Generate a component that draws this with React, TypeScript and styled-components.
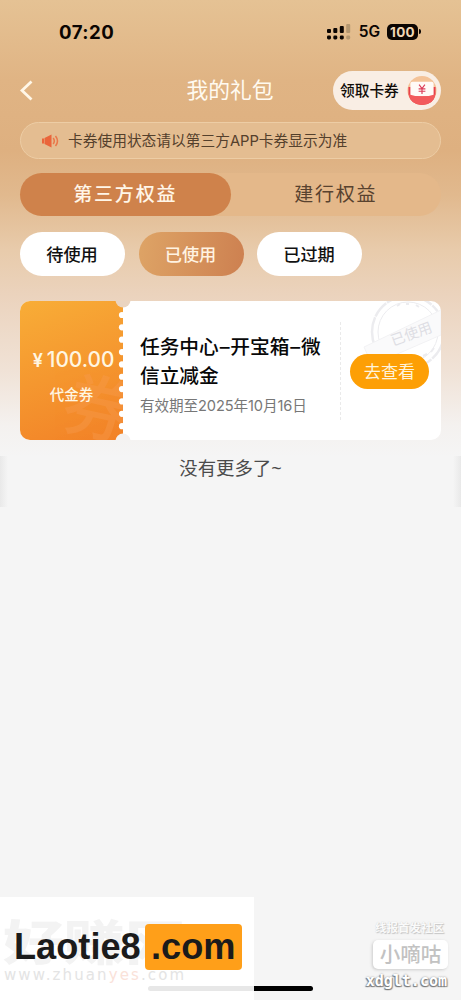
import React from 'react';
import styled, { createGlobalStyle } from 'styled-components';

const Global = createGlobalStyle`
  * { box-sizing: border-box; }
  body { margin: 0; background: #f5f5f5; font-family: Inter, "Noto Sans CJK SC", sans-serif; }
`;

const Screen = styled.main`
  position: relative;
  width: 461px;
  height: 1000px;
  overflow: hidden;
  background: linear-gradient(180deg, #e5c294 0, #e0b484 80px, #deb080 150px, #e1b98e 195px, #e8cbab 250px, #ebd3bd 295px, #f0e2d6 370px, #f4f1ef 425px, #f5f5f5 457px);
`;

const StatusBar = styled.header`
  display: flex;
  align-items: center;
  height: 62px;
  padding: 1px 40px 0 59px;
  color: #0b0502;
`;
const Clock = styled.span`
  flex: 1;
  font: 700 18.6px/24px Inter, sans-serif;
  letter-spacing: .5px;
`;
const Network = styled.span`
  margin: 0 7px 0 8px;
  font: 600 15.5px/20px Inter, sans-serif;
`;
const Battery = styled.span`
  width: 31px;
  height: 16px;
  border-radius: 5px;
  background: #0b0502;
  color: #f0d7b5;
  font: 700 13.5px/16px Inter, sans-serif;
  letter-spacing: .3px;
  text-align: center;
`;
const BatteryTip = styled.span`
  width: 2px;
  height: 5px;
  margin-left: 1px;
  border-radius: 0 2px 2px 0;
  background: #0b0502;
`;

const NavBar = styled.nav`
  display: grid;
  grid-template-columns: 128px 1fr 128px;
  align-items: center;
  height: 57px;
  padding: 0 20px;
`;
const PageTitle = styled.h1`
  margin: -2px 0 0 -1px;
  color: #fffaf0;
  font-size: 21.8px;
  font-weight: 400;
  line-height: 30px;
  text-align: center;
  white-space: nowrap;
`;
const ClaimButton = styled.button`
  display: flex;
  align-items: center;
  justify-content: space-between;
  justify-self: end;
  width: 108px;
  height: 39px;
  padding: 0 4px 0 7px;
  border: 0;
  border-radius: 20px;
  background: #f9eee4;
  color: #100c08;
  font: 500 14.7px/20px Inter, "Noto Sans CJK SC", sans-serif;
  white-space: nowrap;
`;

const Content = styled.section`
  display: flex;
  flex-direction: column;
  padding: 3px 20px 0;
`;
const Notice = styled.div`
  display: flex;
  align-items: center;
  gap: 9px;
  height: 37px;
  padding-left: 21px;
  border: 1.5px solid #edcda5;
  border-radius: 19px;
  background: #e4bd91;
  color: #54402c;
  font-size: 14.73px;
  line-height: 20px;
  white-space: nowrap;
`;
const Tabs = styled.div`
  display: flex;
  height: 43px;
  margin-top: 14px;
  border-radius: 22px;
  background: #e4b88a;
`;
const Tab = styled.div<{ $active?: boolean }>`
  flex: 1;
  border-radius: 22px;
  background: ${p => (p.$active ? '#cf824b' : 'transparent')};
  color: ${p => (p.$active ? '#fff6e8' : '#58422f')};
  font-size: 19px;
  font-weight: ${p => (p.$active ? 500 : 400)};
  line-height: 44px;
  letter-spacing: 1.8px;
  text-align: center;
`;
const Filters = styled.div`
  display: flex;
  gap: 13.5px;
  margin-top: 16px;
`;
const Filter = styled.div<{ $active?: boolean }>`
  width: 105px;
  height: 44px;
  padding-right: 1px;
  border-radius: 22px;
  background: ${p => (p.$active ? 'linear-gradient(100deg, #dea466, #cd8050)' : '#fff')};
  color: ${p => (p.$active ? '#fff3e2' : '#111')};
  font-size: 17.2px;
  font-weight: 500;
  line-height: 45px;
  text-align: center;
`;

const Coupon = styled.article`
  position: relative;
  display: flex;
  height: 139px;
  margin-top: 25px;
  border-radius: 10px;
  overflow: hidden;
  background: #fff;
`;
const Value = styled.div`
  position: relative;
  display: flex;
  flex-direction: column;
  align-items: center;
  width: 103px;
  padding: 45px 0 0 2px;
  overflow: hidden;
  background: linear-gradient(160deg, #f8ad37, #f28127);
  color: #fff6e2;
`;
const ValueMark = styled.span`
  position: absolute;
  left: 43px;
  top: 68px;
  color: #f79b50;
  opacity: .38;
  font-size: 70px;
  font-weight: 500;
  line-height: 80px;
  transform: rotate(12deg);
`;
const Amount = styled.div`
  position: relative;
  display: flex;
  align-items: baseline;
  gap: 4px;
  margin-left: 2px;
  font: 500 20.8px/28px Inter, sans-serif;
  white-space: nowrap;
`;
const Currency = styled.span`
  font-size: 18px;
  font-weight: 600;
`;
const Kind = styled.div`
  position: relative;
  margin: 10px 2px 0 0;
  font-size: 14.5px;
  font-weight: 500;
  line-height: 20px;
`;
const Perforation = styled.svg`
  position: absolute;
  left: 94px;
  top: 0;
`;
const Details = styled.div`
  width: 217px;
  padding: 32px 0 0 17px;
`;
const CouponTitle = styled.h2`
  margin: 0;
  color: #080808;
  font-size: 19.7px;
  font-weight: 500;
  line-height: 29px;
  white-space: nowrap;
`;
const Dash = styled.span`
  display: inline-block;
  width: 11.6px;
  text-align: center;
`;
const Expiry = styled.div`
  margin-top: 5px;
  color: #777;
  font-size: 14.6px;
  line-height: 20px;
  letter-spacing: -.1px;
  white-space: nowrap;
`;
const Action = styled.div`
  position: relative;
  display: flex;
  align-items: center;
  width: 101px;
  height: 98px;
  margin-top: 21px;
  padding-left: 9px;
  border-left: 1px dashed #eaeaea;
`;
const ViewButton = styled.button`
  width: 79px;
  height: 35px;
  padding: 0;
  border: 0;
  border-radius: 18px;
  background: #fd9f05;
  color: #fff4dc;
  font: 400 17.1px/35px Inter, "Noto Sans CJK SC", sans-serif;
`;
const Stamp = styled.svg`
  position: absolute;
  right: 0;
  top: 0;
`;
const ListEnd = styled.div`
  display: flex;
  justify-content: space-between;
  height: 51px;
  margin: 16px -20px 0;
  background: #f5f5f5;
  color: #4b4b4b;
  font-size: 18.4px;
  line-height: 24px;
`;
const Tilde = styled.span`
  font-family: "Noto Sans", sans-serif;
`;
const EdgeShade = styled.span<{ $right?: boolean }>`
  width: 8px;
  background: linear-gradient(${p => (p.$right ? '270deg' : '90deg')}, #e9e9e9, #f5f5f5);
`;

const HomeIndicator = styled.div`
  position: absolute;
  left: 148px;
  top: 986px;
  width: 165px;
  height: 5px;
  border-radius: 3px;
  background: #000;
`;
const SiteBanner = styled.div`
  position: absolute;
  left: 0;
  top: 897px;
  width: 254px;
  height: 103px;
  overflow: hidden;
  background: #fff;
`;
const FaintName = styled.span`
  position: absolute;
  left: 3px;
  top: 16px;
  color: #f3f3f3;
  font-size: 61px;
  font-weight: 900;
  line-height: 60px;
  white-space: nowrap;
  transform: scaleY(.78);
`;
const FaintAddress = styled.span`
  position: absolute;
  left: 4px;
  top: 68px;
  color: #e4e4e4;
  font: 15px/20px "DejaVu Sans", sans-serif;
  letter-spacing: 2.1px;
  white-space: nowrap;
`;
const Peach = styled.span`
  color: #fae2d9;
`;
const SiteName = styled.div`
  position: absolute;
  left: 14px;
  top: 27px;
  display: flex;
  align-items: center;
  color: #1b1b1b;
  font: 700 36.2px/46px "Liberation Sans", sans-serif;
  white-space: nowrap;
`;
const SiteSuffix = styled.span`
  width: 97px;
  height: 46px;
  margin-left: 4px;
  border-radius: 4px;
  background: #ff9f19;
  text-align: center;
`;
const FaintBar = styled.span`
  position: absolute;
  left: 148px;
  top: 89px;
  width: 110px;
  height: 5px;
  border-radius: 3px;
  background: #e7e7e7;
`;
const Community = styled.div`
  position: absolute;
  right: 13px;
  top: 921px;
  display: flex;
  flex-direction: column;
  align-items: flex-end;
`;
const Slogan = styled.span`
  margin-right: 4px;
  color: #fafafa;
  font-size: 11.5px;
  font-weight: 700;
  line-height: 15px;
  text-shadow: 1px 1px 1px #c4c4c4, 0 0 1px #d0d0d0;
`;
const CommunityName = styled.span`
  width: 75px;
  height: 29px;
  margin: 4px 0 0;
  border-radius: 5px;
  background: #fff;
  box-shadow: -1px 1px 3px #ccc;
  color: #c2c2c2;
  font-size: 20.5px;
  font-weight: 500;
  line-height: 29px;
  text-align: center;
`;
const CommunityAddress = styled.span`
  margin: 3px 1px 0 0;
  color: #fff;
  font: 700 15px/19px "DejaVu Sans Mono", monospace;
  text-shadow: -1px 1px 1px #777, 1px 1px 1px #888, 0 0 2px #999;
`;

const BackIcon = () => (
  <svg width="14" height="22" viewBox="0 0 14 22" fill="none" stroke="#fff7e8" strokeWidth="2.8">
    <path d="M11.5 1.500 2 10.500l9.500 9" />
  </svg>
);

const SignalIcon = () => (
  <svg width="24" height="16" viewBox="0 0 24 16" fill="#0b0502">
    <rect x="0" y="5" width="4" height="4" rx="1" />
    <rect x="6.3" y="4" width="4" height="5" rx="1" />
    <rect x="12.8" y="2" width="4" height="7" rx="1" />
    <rect x="19.2" y="0" width="4" height="9" rx="1" fill="#b49770" />
    <rect x="0" y="11.5" width="4" height="4" rx="1.4" />
    <rect x="6.3" y="11.5" width="4" height="4" rx="1.4" />
    <rect x="12.8" y="11.5" width="4" height="4" rx="1.4" />
    <rect x="19.2" y="11.5" width="4" height="4" rx="1.4" fill="#b49770" />
  </svg>
);

const RedPacketIcon = () => (
  <svg width="30" height="31" viewBox="0 0 31 31">
    <circle cx="15.500" cy="15.500" r="15" fill="#f4c398" />
    <path d="M1.500 12h28v7q-2 11-14 11.500Q4 30 1.500 19Z" fill="#e9414b" />
    <rect x="3.500" y="6.500" width="24" height="15" rx="2" fill="#fffaf7" />
    <path d="M1.500 19.500q14 4.500 28 0-2 10.500-14 11-12-.5-14-11Z" fill="#f25a5c" />
    <path d="m12.500 9.500 3 4 3-4m-3 4v5.500m-3.500-5.200h7m-7 2.500h7" fill="none" stroke="#dc3d59" strokeWidth="1.200" />
  </svg>
);

const SpeakerIcon = () => (
  <svg width="17" height="14" viewBox="0 0 17 14" fill="none">
    <path d="M0 4.500h2v5H0ZM2.500 4 9.500.5v13L2.500 10Z" fill="#ea653b" />
    <path d="M11.200 4q2.200 3 0 6M13.500 2q4 5 0 10" stroke="#ea7649" strokeWidth="1.500" />
  </svg>
);

const teeth = Array.from({ length: 10 }, (_, i) => 14 + i * 12.35);

export default function App() {
  return (
    <Screen>
      <Global />
      <StatusBar>
        <Clock>07:20</Clock>
        <SignalIcon />
        <Network>5G</Network>
        <Battery>100</Battery>
        <BatteryTip />
      </StatusBar>
      <NavBar>
        <BackIcon />
        <PageTitle>我的礼包</PageTitle>
        <ClaimButton>领取卡券<RedPacketIcon /></ClaimButton>
      </NavBar>
      <Content>
        <Notice><SpeakerIcon />卡券使用状态请以第三方APP卡券显示为准</Notice>
        <Tabs>
          <Tab $active>第三方权益</Tab>
          <Tab>建行权益</Tab>
        </Tabs>
        <Filters>
          <Filter>待使用</Filter>
          <Filter $active>已使用</Filter>
          <Filter>已过期</Filter>
        </Filters>
        <Coupon>
          <Value>
            <ValueMark>券</ValueMark>
            <Amount><Currency>¥</Currency>100.00</Amount>
            <Kind>代金券</Kind>
          </Value>
          <Details>
            <CouponTitle>任务中心<Dash>–</Dash>开宝箱<Dash>–</Dash>微<br />信立减金</CouponTitle>
            <Expiry>有效期至2025年10月16日</Expiry>
          </Details>
          <Stamp width="80" height="72" viewBox="0 0 80 72" fill="none">
            <g stroke="#ececef">
              <circle cx="47" cy="31" r="36" strokeWidth="2.500" strokeDasharray="30 1 17 1" />
              <circle cx="47" cy="31" r="30" />
              <path d="M36 5l3-2m6 0h3m7 1 3 2M62 55l4-2m4-2 3-4" strokeWidth="2" />
            </g>
            <path d="M3 46 80 9v25L11 64Z" fill="#fafafb" stroke="#f2f2f4" />
            <text x="32" y="45" transform="rotate(-20 32 45)" fill="#dedee4" fontSize="14.300" fontFamily="Noto Sans CJK SC">已使用</text>
          </Stamp>
          <Action><ViewButton>去查看</ViewButton></Action>
          <Perforation width="20" height="139" viewBox="0 0 20 139">
            {teeth.map(y => <circle key={y} cx="8" cy={y} r="3.1" fill="#fff" />)}
            <circle cx="9" cy="-1" r="7.500" fill="#ead4c0" />
            <circle cx="9" cy="140" r="7.500" fill="#f4f1f0" />
          </Perforation>
        </Coupon>
        <ListEnd><EdgeShade /><span>没有更多了<Tilde>~</Tilde></span><EdgeShade $right /></ListEnd>
      </Content>
      <HomeIndicator />
      <SiteBanner>
        <FaintName>好赚网</FaintName>
        <FaintAddress>www.zhuan<Peach>yes</Peach>.com</FaintAddress>
        <SiteName>Laotie8<SiteSuffix>.com</SiteSuffix></SiteName>
        <FaintBar />
      </SiteBanner>
      <Community>
        <Slogan>线报首发社区</Slogan>
        <CommunityName>小嘀咕</CommunityName>
        <CommunityAddress>xdglt.com</CommunityAddress>
      </Community>
    </Screen>
  );
}
